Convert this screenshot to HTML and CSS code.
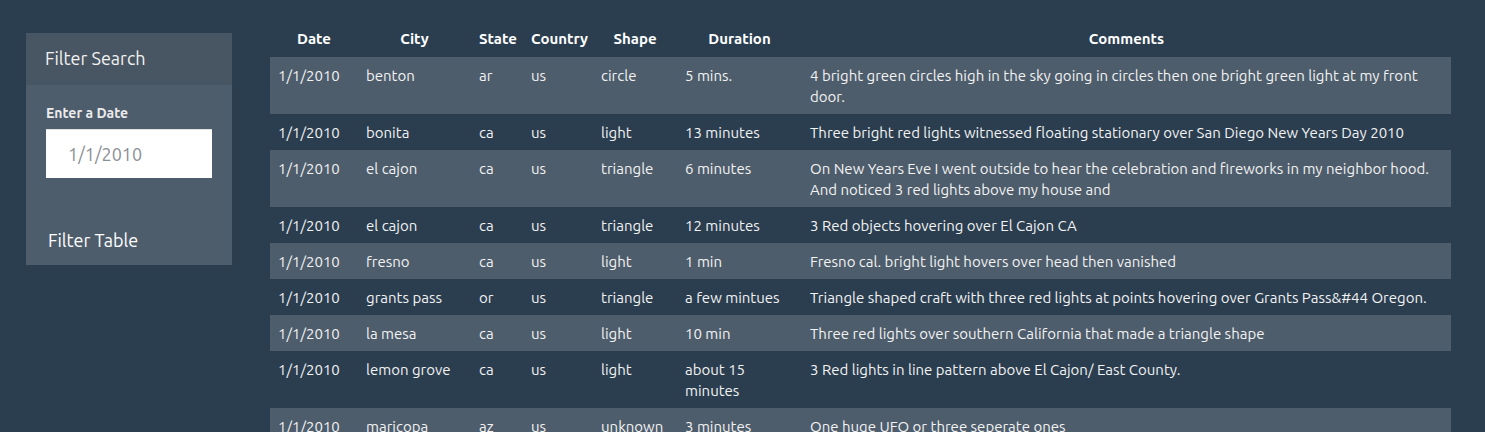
FILE: index.html
```html
<!DOCTYPE html>
<html lang="en">
<head>
<meta charset="utf-8">
<title>UFO Sightings</title>
<link rel="stylesheet" href="styles.css">
</head>
<body>
<div class="page">
  <aside class="panel">
    <div class="panel-heading">Filter Search</div>
    <div class="panel-body">
      <label class="field-label" for="datetime">Enter a Date</label>
      <input class="field-input" id="datetime" type="text" placeholder="1/1/2010">
      <div class="filter-btn">Filter Table</div>
    </div>
  </aside>
  <main class="content">
    <table class="ufo-table">
      <colgroup>
        <col class="c-date"><col class="c-city"><col class="c-state"><col class="c-country"><col class="c-shape"><col class="c-duration"><col class="c-comments">
      </colgroup>
      <thead>
        <tr><th>Date</th><th>City</th><th>State</th><th>Country</th><th>Shape</th><th>Duration</th><th>Comments</th></tr>
      </thead>
      <tbody>
        <tr><td>1/1/2010</td><td>benton</td><td>ar</td><td>us</td><td>circle</td><td>5 mins.</td><td>4 bright green circles high in the sky going in circles then one bright green light at my front door.</td></tr>
        <tr><td>1/1/2010</td><td>bonita</td><td>ca</td><td>us</td><td>light</td><td>13 minutes</td><td>Three bright red lights witnessed floating stationary over San Diego New Years Day 2010</td></tr>
        <tr><td>1/1/2010</td><td>el cajon</td><td>ca</td><td>us</td><td>triangle</td><td>6 minutes</td><td>On New Years Eve I went outside to hear the celebration and fireworks in my neighbor hood. And noticed 3 red lights above my house and</td></tr>
        <tr><td>1/1/2010</td><td>el cajon</td><td>ca</td><td>us</td><td>triangle</td><td>12 minutes</td><td>3 Red objects hovering over El Cajon CA</td></tr>
        <tr><td>1/1/2010</td><td>fresno</td><td>ca</td><td>us</td><td>light</td><td>1 min</td><td>Fresno cal. bright light hovers over head then vanished</td></tr>
        <tr><td>1/1/2010</td><td>grants pass</td><td>or</td><td>us</td><td>triangle</td><td>a few mintues</td><td>Triangle shaped craft with three red lights at points hovering over Grants Pass&amp;#44 Oregon.</td></tr>
        <tr><td>1/1/2010</td><td>la mesa</td><td>ca</td><td>us</td><td>light</td><td>10 min</td><td>Three red lights over southern California that made a triangle shape</td></tr>
        <tr><td>1/1/2010</td><td>lemon grove</td><td>ca</td><td>us</td><td>light</td><td>about 15 minutes</td><td>3 Red lights in line pattern above El Cajon/ East County.</td></tr>
        <tr><td>1/1/2010</td><td>maricopa</td><td>az</td><td>us</td><td>unknown</td><td>3 minutes</td><td>One huge UFO or three seperate ones</td></tr>
      </tbody>
    </table>
  </main>
</div>
</body>
</html>
```
FILE: styles.css
```css
html, body {
  margin: 0;
  padding: 0;
  background: #2b3e50;
  color: #f2f2f2;
  font-family: Ubuntu, Lato, "Open Sans", sans-serif;
  font-size: 15px;
}
.page {
  display: flex;
  align-items: flex-start;
  padding: 21px 0 0 26px;
}
.panel {
  width: 206px;
  margin-top: 12px;
  background: #4e5d6c;
  flex: none;
}
.panel-heading {
  background: #485563;
  height: 52px;
  box-sizing: border-box;
  padding: 14px 19px 0;
  font-size: 18px;
  line-height: 22px;
}
.panel-body {
  display: flex;
  flex-direction: column;
  padding: 19px 20px 14px 20px;
}
.field-label {
  font-weight: bold;
  font-size: 14px;
  line-height: 18px;
  color: #ebebeb;
}
.field-input {
  margin-top: 7px;
  width: 166px;
  height: 49px;
  box-sizing: border-box;
  border: 0;
  border-top: 1px solid #e0e0e0;
  padding: 0 0 0 22px;
  font-family: inherit;
  font-size: 18px;
  background: #fff;
  color: #333;
}
.field-input::placeholder {
  color: #8a8f96;
}
.filter-btn {
  margin-top: 51px;
  padding-left: 2px;
  font-size: 18px;
  line-height: 22px;
  color: #fff;
}
.content {
  margin-left: 38px;
}
.ufo-table {
  border-collapse: collapse;
  table-layout: fixed;
  width: 1181px;
}
.c-date { width: 88px; }
.c-city { width: 113px; }
.c-state { width: 52px; }
.c-country { width: 70px; }
.c-shape { width: 84px; }
.c-duration { width: 125px; }
.c-comments { width: 649px; }
.ufo-table th,
.ufo-table td {
  padding: 8px 8px 7px;
  line-height: 21px;
  vertical-align: top;
  text-align: left;
}
.ufo-table th {
  padding: 7px 8px 8px;
  text-align: center;
  font-weight: bold;
  color: #fff;
}
.ufo-table tbody tr:nth-child(odd) {
  background: #4e5d6c;
}
```
